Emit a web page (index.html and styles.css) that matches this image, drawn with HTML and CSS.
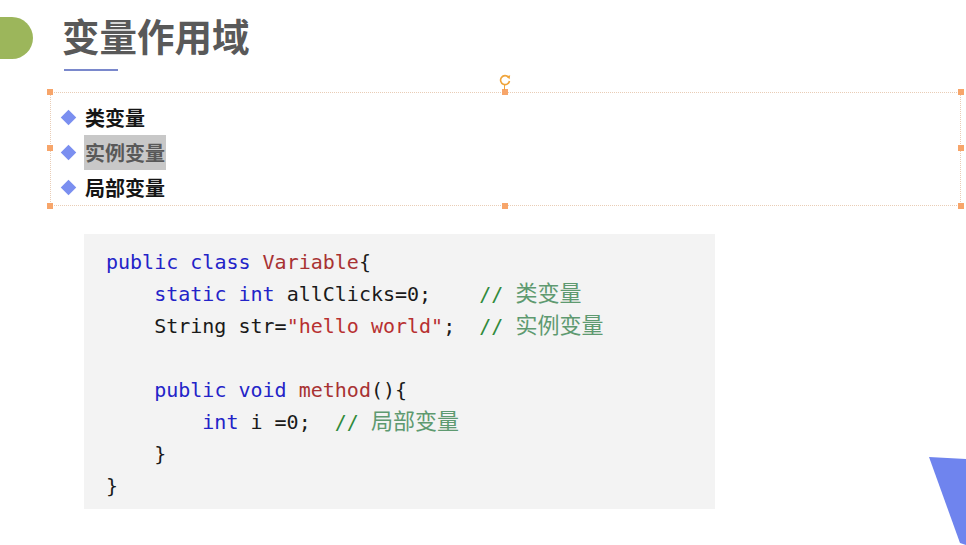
FILE: index.html
```html
<!DOCTYPE html>
<html lang="zh">
<head>
<meta charset="utf-8">
<link rel="stylesheet" href="styles.css">
</head>
<body>
<div class="slide">
  <header class="head">
    <div class="pill"></div>
    <h1 class="title">变量作用域</h1>
  </header>
  <div class="rule"></div>
  <div class="selbox">
    <span class="h h-tl"></span><span class="h h-tm"></span><span class="h h-tr"></span>
    <span class="h h-ml"></span><span class="h h-mr"></span>
    <span class="h h-bl"></span><span class="h h-bm"></span><span class="h h-br"></span>
    <span class="rot">
      <svg width="14" height="14" viewBox="0 0 14 14"><path d="M10.5 4.2A4.5 4.5 0 1 0 11.5 8" fill="none" stroke="#f0a43a" stroke-width="1.6"/><path d="M8.2 3.6L12.2 2.2L11.6 6.2Z" fill="#f0a43a"/></svg>
    </span>
    <ul class="list">
      <li class="item"><span class="dia"></span><span class="txt">类变量</span></li>
      <li class="item"><span class="dia"></span><span class="txt hl">实例变量</span></li>
      <li class="item"><span class="dia"></span><span class="txt">局部变量</span></li>
    </ul>
  </div>
  <div class="code">
    <div class="ln"><span class="kw">public</span> <span class="kw">class</span> <span class="cls">Variable</span>{</div>
    <div class="ln">    <span class="kw">static</span> <span class="kw">int</span> allClicks=0;    <span class="cm">// <span class="zh">类变量</span></span></div>
    <div class="ln">    String str=<span class="str">"hello world"</span>;  <span class="cm">// <span class="zh">实例变量</span></span></div>
    <div class="ln"> </div>
    <div class="ln">    <span class="kw">public</span> <span class="kw">void</span> <span class="cls">method</span>(){</div>
    <div class="ln">        <span class="kw">int</span> i =0;  <span class="cm">// <span class="zh">局部变量</span></span></div>
    <div class="ln">    }</div>
    <div class="ln">}</div>
  </div>
  <svg class="tri" width="40" height="90" viewBox="0 0 40 90"><polygon points="3,2 40,4 40,90 34,88" fill="#6f84ee"/></svg>
</div>
</body>
</html>
```
FILE: styles.css
```css
html, body {
  margin: 0;
  padding: 0;
  background: #ffffff;
}
.slide {
  position: relative;
  width: 966px;
  height: 545px;
  overflow: hidden;
  background: #fff;
  font-family: "Noto Sans CJK SC", "Noto Sans", sans-serif;
}
.head {
  display: flex;
  align-items: center;
  padding-top: 17px;
  height: 42px;
}
.pill {
  width: 33px;
  height: 42px;
  background: #9cb65b;
  border-radius: 0 21px 21px 0;
}
.title {
  margin: -6px 0 0 29px;
  font-size: 37.5px;
  line-height: 42px;
  font-weight: 700;
  color: #595959;
}
.rule {
  margin: 10px 0 0 64px;
  width: 54px;
  height: 2px;
  background: #7a88cc;
}
.selbox {
  position: relative;
  margin: 21px 0 0 50px;
  width: 909px;
  height: 112px;
  border: 1px dotted #e9cdb6;
}
.h {
  position: absolute;
  width: 6px;
  height: 6px;
  background: #f7a56a;
}
.h-tl { left: -4px; top: -4px; }
.h-tm { left: 451px; top: -4px; }
.h-tr { right: -4px; top: -4px; }
.h-ml { left: -4px; top: 52px; }
.h-mr { right: -4px; top: 52px; }
.h-bl { left: -4px; bottom: -4px; }
.h-bm { left: 451px; bottom: -4px; }
.h-br { right: -4px; bottom: -4px; }
.rot {
  position: absolute;
  left: 447px;
  top: -20px;
  width: 14px;
  height: 14px;
}
.rot svg { display: block; }
.rot::after {
  content: "";
  position: absolute;
  left: 6px;
  top: 11px;
  width: 1px;
  height: 6px;
  background: #f0a43a;
}
.list {
  list-style: none;
  margin: 0;
  padding: 7px 0 0 12px;
}
.item {
  display: flex;
  align-items: center;
  height: 35px;
}
.dia {
  width: 11px;
  height: 11px;
  background: #7b8ff0;
  transform: rotate(45deg);
  margin-right: 11px;
}
.txt {
  font-size: 20px;
  font-weight: 700;
  color: #151515;
  line-height: 35px;
}
.hl {
  background: #c8c8c8;
  color: #595959;
  padding: 0 1px;
  margin-left: -1px;
}
.code {
  margin: 28px 0 0 84px;
  width: 609px;
  height: 263px;
  padding: 12px 0 0 22px;
  background: #f3f3f3;
  font-family: "DejaVu Sans Mono", "Liberation Mono", monospace;
  font-size: 20px;
  color: #1a1a1a;
}
.ln {
  height: 32px;
  line-height: 32px;
  white-space: pre;
}
.code .kw { color: #2323c8; }
.code .cls { color: #a83232; }
.code .str { color: #b83030; }
.code .cm { color: #2f8a3a; }
.code .zh {
  font-family: "Noto Sans CJK SC", sans-serif;
  font-size: 22px;
  line-height: 20px;
  color: #5e9a70;
}
.tri {
  position: absolute;
  left: 926px;
  top: 455px;
}
```
